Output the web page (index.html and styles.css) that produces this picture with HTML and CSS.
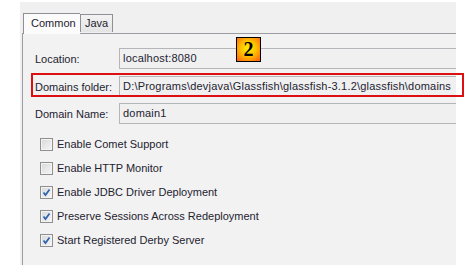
FILE: index.html
```html
<!DOCTYPE html>
<html>
<head>
<meta charset="utf-8">
<link rel="stylesheet" href="styles.css">
</head>
<body>
<div class="window">
  <div class="tabs">
    <div class="tab active">Common</div>
    <div class="tab">Java</div>
  </div>
  <div class="panel">
    <div class="row r1">
      <span class="label">Location:</span>
      <div class="field">localhost:8080</div>
    </div>
    <div class="row r2">
      <span class="label">Domains folder:</span>
      <div class="field">D:\Programs\devjava\Glassfish\glassfish-3.1.2\glassfish\domains</div>
    </div>
    <div class="row r3">
      <span class="label">Domain Name:</span>
      <div class="field">domain1</div>
    </div>
    <div class="checks">
      <div class="check"><span class="box"></span>Enable Comet Support</div>
      <div class="check"><span class="box"></span>Enable HTTP Monitor</div>
      <div class="check"><span class="box on"><svg width="11" height="11" viewBox="0 0 11 11"><path d="M2.5 5.5 L4.5 8 L8.5 2.5" fill="none" stroke="#2d5fb4" stroke-width="1.7"/></svg></span>Enable JDBC Driver Deployment</div>
      <div class="check"><span class="box on"><svg width="11" height="11" viewBox="0 0 11 11"><path d="M2.5 5.5 L4.5 8 L8.5 2.5" fill="none" stroke="#2d5fb4" stroke-width="1.7"/></svg></span>Preserve Sessions Across Redeployment</div>
      <div class="check"><span class="box on"><svg width="11" height="11" viewBox="0 0 11 11"><path d="M2.5 5.5 L4.5 8 L8.5 2.5" fill="none" stroke="#2d5fb4" stroke-width="1.7"/></svg></span>Start Registered Derby Server</div>
    </div>
  </div>
</div>
<div class="highlight"></div>
<div class="badge">2</div>
</body>
</html>
```
FILE: styles.css
```css
html, body {
  margin: 0;
  padding: 0;
  background: #ffffff;
  width: 470px;
  height: 265px;
  overflow: hidden;
}
body {
  font-family: "Liberation Sans", Arial, sans-serif;
  font-size: 11px;
  color: #1e2330;
  position: relative;
}
.window {
  margin-left: 20px;
  margin-top: 2px;
  width: 436px;
  height: 263px;
  background: #f0f0f0;
  overflow: hidden;
}
.tabs {
  display: flex;
  align-items: flex-end;
  padding-top: 10px;
  padding-left: 3px;
  height: 21px;
  position: relative;
  z-index: 2;
}
.tab {
  box-sizing: border-box;
  border: 1px solid #8e9096;
  border-bottom: none;
  height: 18px;
  line-height: 17px;
  padding: 0 4px;
  background: linear-gradient(#f3f3f3, #e4e4e4);
  margin-bottom: 1px;
}
.tab.active {
  height: 21px;
  line-height: 19px;
  width: 57px;
  padding: 0 0 0 7px;
  background: #fbfbfb;
  margin-bottom: -1px;
  border-right: none;
}
.panel {
  margin-left: 2px;
  border-top: 1px solid #9a9ca2;
  border-left: 1px solid #9a9ca2;
  height: 240px;
  padding-top: 14px;
  box-sizing: border-box;
  background: #f2f2f2;
}
.row {
  display: flex;
  align-items: center;
  height: 21px;
}
.r1 { margin-bottom: 7px; }
.r2 { margin-bottom: 6px; }
.label {
  width: 84px;
  padding-left: 12px;
  flex: none;
}
.field {
  flex: none;
  width: 400px;
  height: 21px;
  box-sizing: border-box;
  border: 1px solid #b4b6ba;
  background: #f0f0f0;
  line-height: 19px;
  padding-left: 3px;
  white-space: nowrap;
  letter-spacing: 0.2px;
}
.checks {
  margin-top: 8px;
  padding-left: 17px;
}
.check {
  height: 24px;
  display: flex;
  align-items: center;
}
.box {
  width: 13px;
  height: 13px;
  box-sizing: border-box;
  border: 1px solid #8f8f8f;
  background: linear-gradient(135deg, #d8d8d8, #f6f6f6);
  box-shadow: inset 0 0 0 1px #f4f4f4;
  margin-right: 4px;
  display: flex;
  align-items: center;
  justify-content: center;
  flex: none;
}
.box svg { display: block; }
.highlight {
  position: absolute;
  left: 31px;
  top: 73px;
  width: 429px;
  height: 20px;
  border: 2px solid #dc1010;
}
.badge {
  position: absolute;
  left: 236px;
  top: 37px;
  width: 25px;
  height: 25px;
  box-sizing: border-box;
  border: 1px solid #000;
  background: radial-gradient(circle at 50% 45%, #fff200 0%, #ffc000 45%, #ff5a10 100%);
  font-family: "Liberation Serif", serif;
  font-weight: bold;
  font-size: 20px;
  line-height: 23px;
  text-align: center;
  color: #000;
}
```
